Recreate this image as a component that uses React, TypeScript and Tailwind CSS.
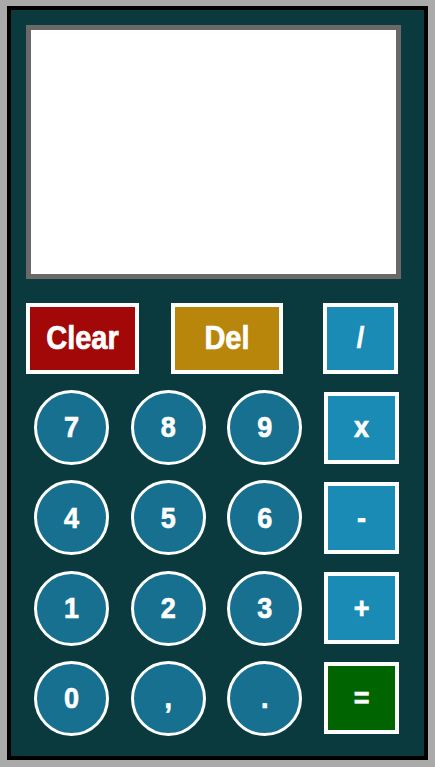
const digits = [
  ["7", "8", "9"],
  ["4", "5", "6"],
  ["1", "2", "3"],
  ["0", ",", "."],
];

const ops = ["x", "-", "+", "="];

function Label({ text }: { text: string }) {
  return (
    <span className="inline-block scale-y-[1.12] [-webkit-text-stroke:0.6px_white]">
      {text}
    </span>
  );
}

function Circle({ label }: { label: string }) {
  return (
    <button className="w-[75px] h-[75px] rounded-full border-[3.5px] border-white bg-[#17708f] text-white text-[27px] font-bold flex items-center justify-center">
      <Label text={label} />
    </button>
  );
}

function Square({ label, color }: { label: string; color: string }) {
  return (
    <button
      className={`w-[75px] h-[72px] border-4 border-white ${color} text-white text-[27px] font-bold flex items-center justify-center`}
    >
      <Label text={label} />
    </button>
  );
}

export default function App() {
  return (
    <div
      className="w-[435px] h-[767px] bg-[#aaaaaa] pt-[6px] px-[7px]"
      style={{ fontFamily: '"Liberation Sans", Arial, sans-serif' }}
    >
      <div className="h-[754px] border-4 border-black bg-[#0a3a3d] p-[15px]">
        <div className="w-[375px] h-[254px] border-[5px] border-[#6b6868] bg-white" />

        <div className="flex mt-[24px]">
          <button className="w-[113px] h-[71px] border-4 border-white bg-[#a30808] text-white text-[29px] font-bold">
            <Label text="Clear" />
          </button>
          <button className="ml-[32px] w-[112px] h-[71px] border-4 border-white bg-[#b8860b] text-white text-[29px] font-bold">
            <Label text="Del" />
          </button>
          <button className="ml-[40px] w-[75px] h-[71px] border-4 border-white bg-[#1a8bb4] text-white text-[27px] font-bold">
            <Label text="/" />
          </button>
        </div>

        <div className="mt-[16px] ml-[8px] grid grid-cols-[75px_75px_75px_75px] auto-rows-[75px] gap-x-[21.7px] gap-y-[15.3px] items-center">
          {digits.map((row, i) => (
            <div key={i} className="contents">
              {row.map((d) => (
                <Circle key={d} label={d} />
              ))}
              <Square
                label={ops[i]}
                color={ops[i] === "=" ? "bg-[#006400]" : "bg-[#1a8bb4]"}
              />
            </div>
          ))}
        </div>
      </div>
    </div>
  );
}
